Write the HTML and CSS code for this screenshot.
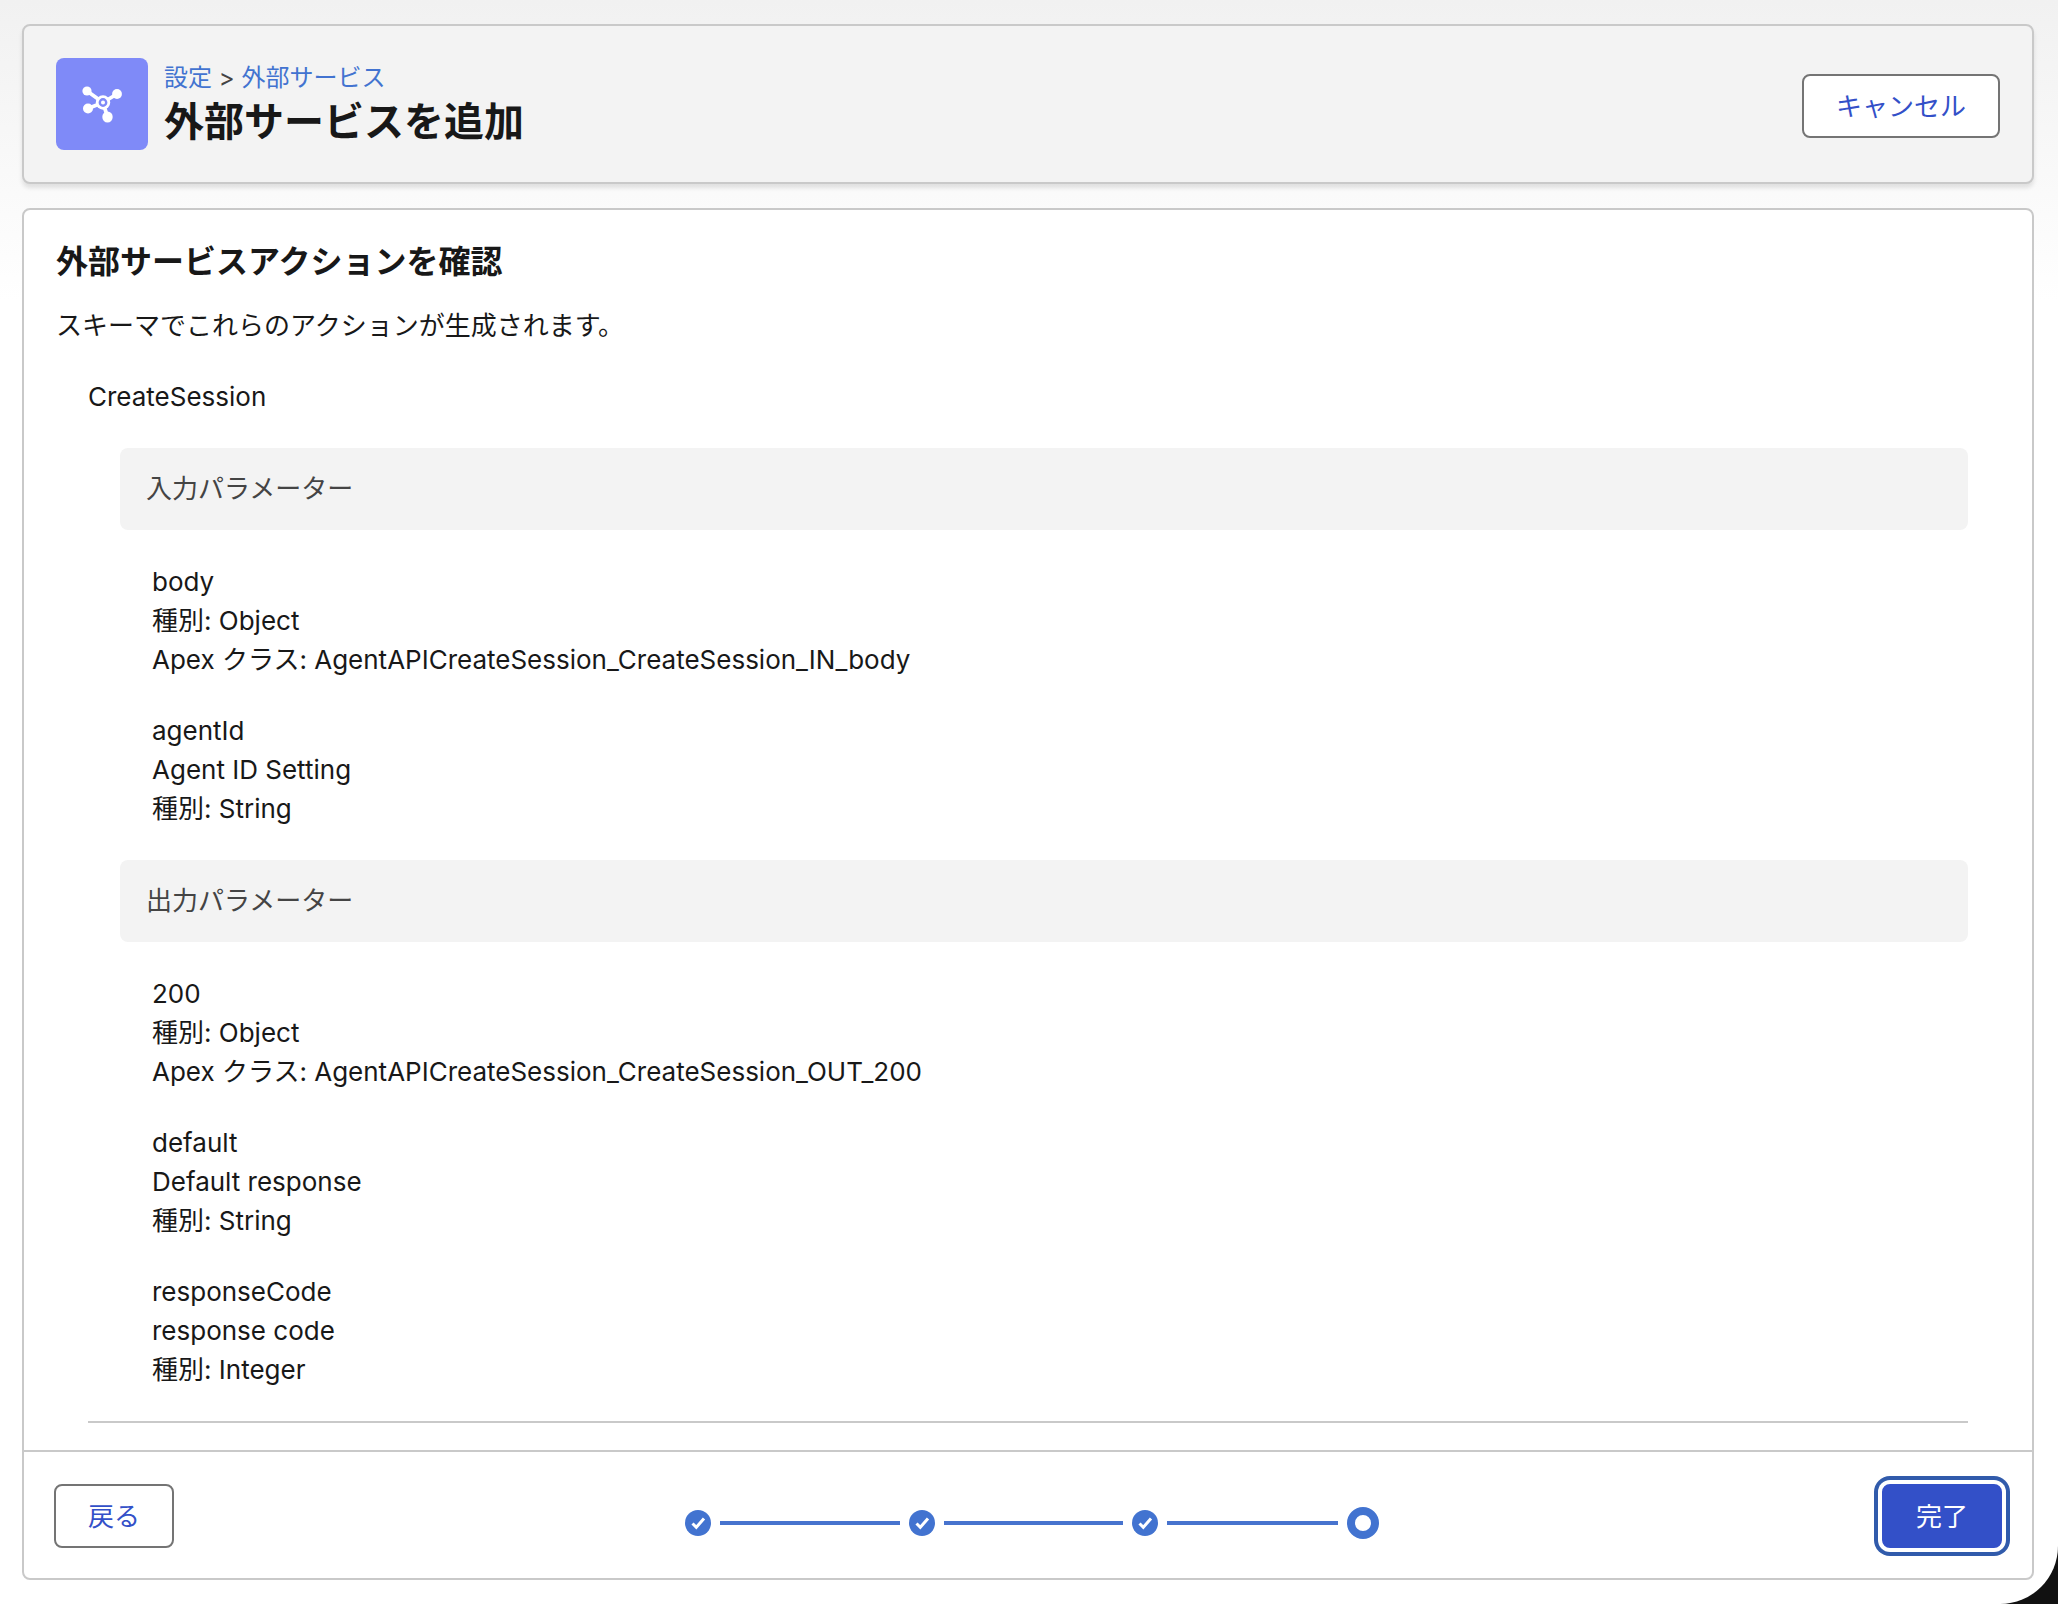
FILE: index.html
```html
<!DOCTYPE html>
<html lang="ja">
<head>
    <meta charset="UTF-8">
    <meta name="viewport" content="width=device-width, initial-scale=1.0">
    <title>外部サービスを追加</title>
    <link rel="stylesheet" href="styles.css">
</head>
<body>
    <div class="page">
        <header class="page-header">
            <span class="header-icon">
                <svg viewBox="0 0 92 92" aria-hidden="true">
                    <g stroke="#fff" stroke-width="3.8">
                        <path d="M31 33L47 44.5M61 36L47 44.5M32 50.5L47 44.5M51.5 59L47 44.5"/>
                    </g>
                    <g fill="#fff">
                        <circle cx="31" cy="33" r="4.6"/>
                        <circle cx="61" cy="36" r="4.9"/>
                        <circle cx="32" cy="50.5" r="5"/>
                        <ellipse cx="51.5" cy="59" rx="5.2" ry="5.6"/>
                        <circle cx="47" cy="44.5" r="7.2"/>
                    </g>
                    <circle cx="47" cy="44.5" r="3.2" fill="#fff" stroke="#7f8af8" stroke-width="2.4"/>
                </svg>
            </span>
            <div class="header-text">
                <nav class="breadcrumb">
                    <a href="#">設定</a> &gt; <a href="#">外部サービス</a>
                </nav>
                <h1>外部サービスを追加</h1>
            </div>
            <button type="button" class="btn">キャンセル</button>
        </header>

        <main class="card">
            <div class="card-body">
                <h2>外部サービスアクションを確認</h2>
                <p class="intro">スキーマでこれらのアクションが生成されます。</p>

                <section class="action">
                    <h3>CreateSession</h3>
                    <div class="params">
                        <h4>入力パラメーター</h4>
                        <ul>
                            <li>
                                <div>body</div>
                                <div>種別: Object</div>
                                <div>Apex クラス: AgentAPICreateSession_CreateSession_IN_body</div>
                            </li>
                            <li>
                                <div>agentId</div>
                                <div>Agent ID Setting</div>
                                <div>種別: String</div>
                            </li>
                        </ul>
                        <h4>出力パラメーター</h4>
                        <ul>
                            <li>
                                <div>200</div>
                                <div>種別: Object</div>
                                <div>Apex クラス: AgentAPICreateSession_CreateSession_OUT_200</div>
                            </li>
                            <li>
                                <div>default</div>
                                <div>Default response</div>
                                <div>種別: String</div>
                            </li>
                            <li>
                                <div>responseCode</div>
                                <div>response code</div>
                                <div>種別: Integer</div>
                            </li>
                        </ul>
                    </div>
                </section>
            </div>

            <footer class="card-footer">
                <button type="button" class="btn">戻る</button>
                <ol class="progress">
                    <li class="step">
                        <svg viewBox="0 0 26 26" aria-hidden="true"><circle cx="13" cy="13" r="13"/><path d="M7.5 13.5l3.8 3.8L19 8.5"/></svg>
                    </li>
                    <li class="step">
                        <svg viewBox="0 0 26 26" aria-hidden="true"><circle cx="13" cy="13" r="13"/><path d="M7.5 13.5l3.8 3.8L19 8.5"/></svg>
                    </li>
                    <li class="step step-last">
                        <svg viewBox="0 0 26 26" aria-hidden="true"><circle cx="13" cy="13" r="13"/><path d="M7.5 13.5l3.8 3.8L19 8.5"/></svg>
                    </li>
                    <li class="step-current" aria-current="step"></li>
                </ol>
                <button type="button" class="btn btn-brand">完了</button>
            </footer>
        </main>
    </div>
</body>
</html>
```

FILE: styles.css
```css
* {
    box-sizing: border-box;
}
html {
    background: #111;
}
body {
    margin: 0;
    font-family: Inter, "Noto Sans CJK JP", sans-serif;
    font-size: 26px;
    line-height: 39px;
    color: #181818;
}
h1, h2, h3, h4, p, ul, ol {
    margin: 0;
    padding: 0;
}
ul, ol {
    list-style: none;
}
.page {
    display: flex;
    flex-direction: column;
    gap: 24px;
    min-height: 100vh;
    padding: 24px 24px 24px 22px;
    background: linear-gradient(#f1f1f1, #fff 300px) #fff;
    border-bottom-right-radius: 58px;
}
.page-header {
    display: flex;
    align-items: flex-start;
    gap: 16px;
    padding: 32px;
    background: #f3f3f3;
    border: 2px solid #c9c9c9;
    border-radius: 8px;
    box-shadow: 0 4px 4px rgba(0, 0, 0, 0.1);
}
.header-icon {
    width: 92px;
    height: 92px;
    background: #7f8af8;
    border-radius: 8px;
}
.header-icon svg {
    display: block;
}
.header-text {
    flex: 1;
}
.breadcrumb {
    font-size: 24px;
    line-height: 40px;
    color: #444;
}
.breadcrumb a {
    color: #4273d0;
    text-decoration: none;
}
h1 {
    font-size: 40px;
    line-height: 48px;
}
.page-header .btn {
    margin-top: 16px;
}
.btn {
    height: 64px;
    padding: 0 32px;
    font: inherit;
    color: #3350c8;
    background: #fff;
    border: 2px solid #747474;
    border-radius: 8px;
    cursor: pointer;
}
.btn-brand {
    color: #fff;
    background: #3350c8;
    border-color: #3350c8;
    box-shadow: 0 0 0 4px #fff, 0 0 0 8px #315bab;
}
.card {
    flex: 1;
    display: flex;
    flex-direction: column;
    background: #fff;
    border: 2px solid #c9c9c9;
    border-radius: 8px;
}
.card-body {
    flex: 1;
    padding: 32px 64px 27px 32px;
}
h2 {
    margin-bottom: 24px;
    font-size: 32px;
    line-height: 40px;
}
.intro {
    margin-bottom: 32px;
}
.action {
    margin-left: 32px;
    border-bottom: 2px solid #c9c9c9;
}
h3, h4 {
    font-size: 26px;
    font-weight: 400;
}
.params {
    margin: 32px 0 0 32px;
}
h4 {
    padding: 21px 26px 22px;
    color: #444;
    background: #f3f3f3;
    border-radius: 8px;
}
.params ul {
    display: flex;
    flex-direction: column;
    gap: 32px;
    padding: 32px;
}
.card-footer {
    display: flex;
    align-items: center;
    justify-content: space-between;
    padding: 32px 30px 30px;
    border-top: 2px solid #c9c9c9;
}
.progress {
    display: flex;
    width: 36%;
    padding: 14px 0 0 8px;
}
.step {
    flex: 26;
    display: flex;
    align-items: center;
    gap: 9px;
    margin-right: 9px;
}
/* the current marker is wider, so the line before it is shorter */
.step-last {
    flex: 25;
}
.step svg {
    width: 26px;
    height: 26px;
    fill: #4273d0;
}
.step path {
    fill: none;
    stroke: #fff;
    stroke-width: 3;
}
.step::after {
    content: "";
    flex: 1;
    height: 4px;
    background: #4773ce;
}
.step-current {
    width: 32px;
    height: 32px;
    border: 8px solid #4273d0;
    border-radius: 50%;
}
```
